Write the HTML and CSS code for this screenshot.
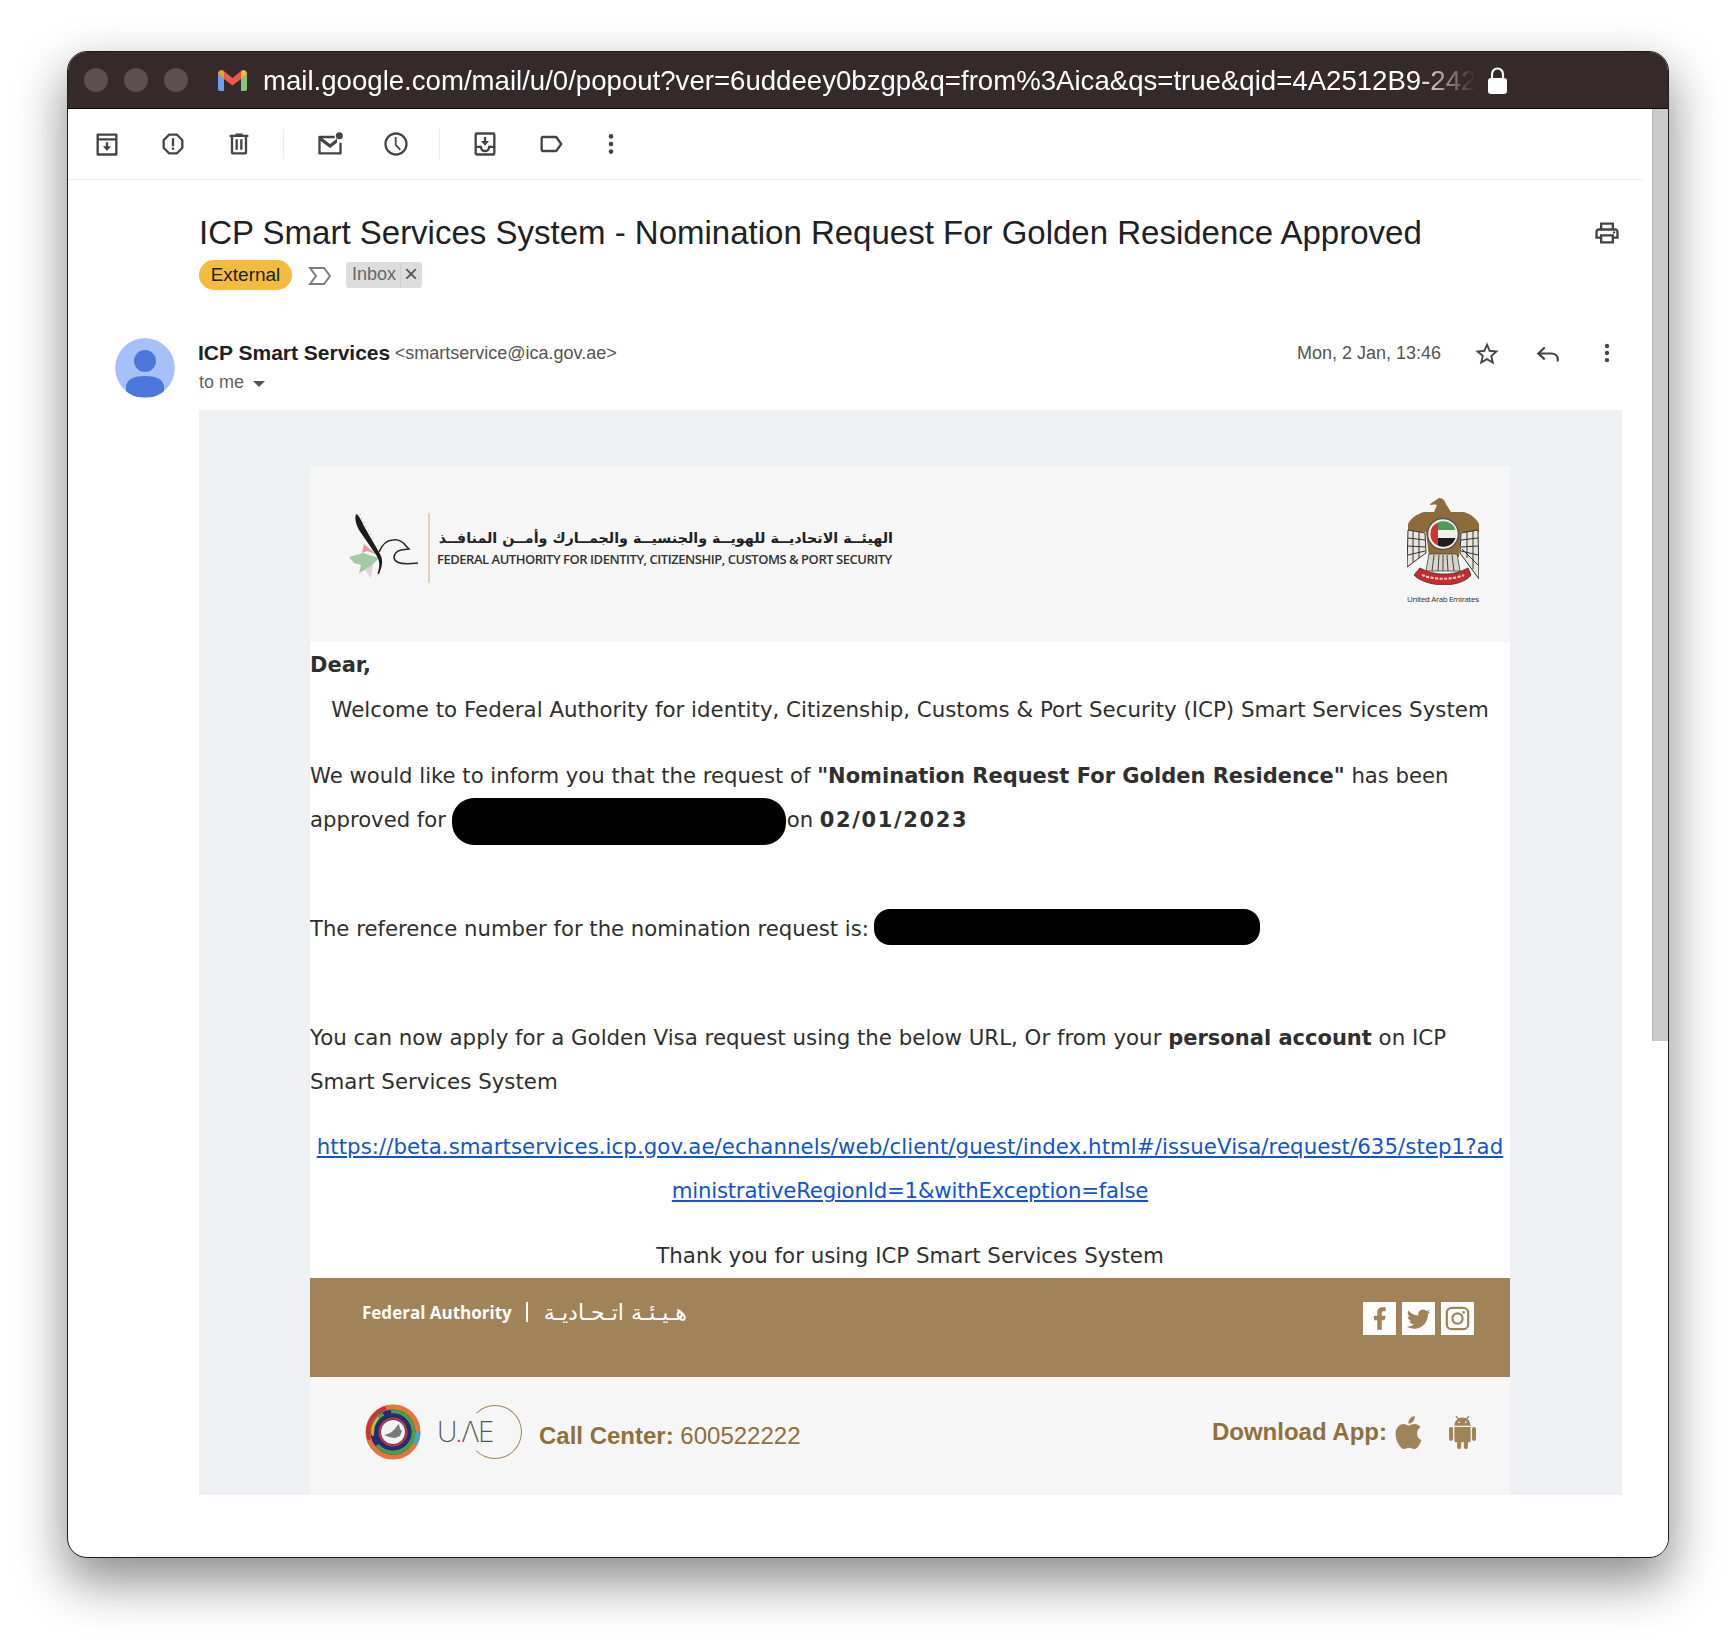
FILE: index.html
```html
<!DOCTYPE html>
<html>
    <head>
        <meta charset="UTF-8">
        <meta name="viewport" content="width=device-width, initial-scale=1.0">
        <title>ICP Smart Services System</title>
        <link rel="stylesheet" href="styles.css">
    </head>

    <body>
        <div class="window">
            <div class="titlebar">
                <span class="dot"></span>
                <span class="dot"></span>
                <span class="dot"></span>
                <svg class="gmail" viewBox="0 0 29 21">
                    <path d="M0 4v15a2 2 0 0 0 2 2h4V9z" fill="#6f9bf0"/>
                    <path d="M29 4v15a2 2 0 0 1-2 2h-4V9z" fill="#86c77f"/>
                    <path d="M0 4C0 1 3-.8 5.500.8L14.500 8 23.500.8C26-.8 29 1 29 4l-6 5-8.500 6.500L6 9z" fill="#ea5b4c"/>
                    <path d="M0 4l6 5V2L5.500.8C3-.8 0 1 0 4z" fill="#d9a93c"/>
                    <path d="M29 4l-6 5V2l.5-1.200C26-.8 29 1 29 4z" fill="#f1bf42"/>
                </svg>
                <span class="url">mail.google.com/mail/u/0/popout?ver=6uddeey0bzgp&amp;q=from%3Aica&amp;qs=true&amp;qid=4A2512B9-242</span>
                <svg class="lock" viewBox="0 0 19 27">
                    <path d="M4 12V7a5.500 5.500 0 0 1 11 0v5" fill="none" stroke="#fff" stroke-width="2.200"/>
                    <rect x="0" y="11" width="19" height="16" rx="3" fill="#fff"/>
                </svg>
            </div>

            <div class="frame">
                <div class="main">
                    <div class="toolbar">
                        <span class="tool"><svg class="icon" viewBox="0 0 24 24"><path d="M4 3h16a1 1 0 0 1 1 1v17a1 1 0 0 1-1 1H4a1 1 0 0 1-1-1V4a1 1 0 0 1 1-1zm1 2v2h14V5zm0 4v11h14V9zm6 1.500h2V14h2.500L12 18l-3.500-4H11z"/></svg></span>
                        <span class="tool"><svg class="icon" viewBox="0 0 24 24"><path d="M15.730 3H8.270L3 8.270v7.460L8.270 21h7.460L21 15.730V8.270zM19 14.900L14.900 19H9.100L5 14.900V9.100L9.100 5h5.800L19 9.100z"/><path d="M11 7h2v7h-2zm0 8h2v2h-2z"/></svg></span>
                        <span class="tool"><svg class="icon" viewBox="0 0 24 24"><path d="M15 4V3H9v1H4v2h1v13c0 1.100.9 2 2 2h10c1.100 0 2-.9 2-2V6h1V4h-5zm2 15H7V6h10v13zM9 8h2v9H9zm4 0h2v9h-2z"/></svg></span>
                        <span class="sep sep-a"></span>
                        <span class="tool"><svg class="icon" viewBox="0 0 24 24"><path d="M2 5h14v2H5.500l6.500 5 6-4.600V11l-6 4.500L4 9.500V19h16v-8h2v9a1 1 0 0 1-1 1H3a1 1 0 0 1-1-1V6a1 1 0 0 1 1-1z"/><circle cx="20" cy="5" r="3"/></svg></span>
                        <span class="tool"><svg class="icon" viewBox="0 0 24 24"><path d="M11.990 2C6.470 2 2 6.480 2 12s4.470 10 9.990 10C17.520 22 22 17.520 22 12S17.520 2 11.990 2zM12 20c-4.420 0-8-3.580-8-8s3.580-8 8-8 8 3.580 8 8-3.580 8-8 8zm.5-14H11v7l4.200 4.500 1.100-1-3.800-4.100z"/></svg></span>
                        <span class="sep sep-b"></span>
                        <span class="tool"><svg class="icon" viewBox="0 0 24 24"><rect x="4" y="3" width="16" height="18" rx="1" fill="none" stroke="#444" stroke-width="2"/><path d="M4 14.500h4.500c0 2 1.500 3.500 3.500 3.500s3.500-1.500 3.500-3.500H20" fill="none" stroke="#444" stroke-width="2"/><path d="M11 6h2v3.500h2.500L12 13.500l-3.500-4H11z"/></svg></span>
                        <span class="tool"><svg class="icon" viewBox="0 0 24 24"><path d="M17.630 5.840C17.270 5.330 16.670 5 16 5L5 5.010C3.900 5.010 3 5.900 3 7v10c0 1.100.9 1.990 2 1.990L16 19c.67 0 1.270-.33 1.630-.84L22 12l-4.370-6.160zM16 17H5V7h11l3.550 5L16 17z"/></svg></span>
                        <span class="tool tool-more"><svg class="icon" viewBox="0 0 24 24"><circle cx="12" cy="5.500" r="2"/><circle cx="12" cy="12" r="2"/><circle cx="12" cy="18.500" r="2"/></svg></span>
                    </div>

                    <div class="subject-row">
                        <div class="subject-text">
                            <h1 class="subject">ICP Smart Services System - Nomination Request For Golden Residence Approved</h1>
                            <div class="chips">
                                <span class="chip-external">External</span>
                                <svg class="marker" viewBox="0 0 24 20"><path d="M2 2h14l6 8-6 8H2l6-8z" fill="none" stroke="#7d7d7d" stroke-width="2"/></svg>
                                <span class="chip-inbox"><span class="chip-name">Inbox</span><span class="chip-x">×</span></span>
                            </div>
                        </div>
                        <svg class="icon print" viewBox="0 0 24 24"><path d="M19 8h-1V3H6v5H5c-1.660 0-3 1.340-3 3v6h4v4h12v-4h4v-6c0-1.660-1.340-3-3-3zM8 5h8v3H8V5zm8 12v2H8v-4h8v2zm2-2v-2H6v2H4v-4c0-.55.45-1 1-1h14c.55 0 1 .45 1 1v4h-2z"/><circle cx="18" cy="11.500" r="1"/></svg>
                    </div>

                    <div class="sender-row">
                        <svg class="avatar" viewBox="0 0 60 60">
                            <circle cx="30" cy="30" r="30" fill="#a6c1fa"/>
                            <circle cx="30" cy="23" r="11" fill="#4e77dc"/>
                            <path d="M11 57V49c0-8 9-11 19-11s19 3 19 11v8c-5 3-33 3-38 0z" fill="#4e77dc"/>
                        </svg>
                        <div class="sender-info">
                            <div class="sender-line"><b class="sender-name">ICP Smart Services</b> <span class="sender-mail">&lt;smartservice@ica.gov.ae&gt;</span></div>
                            <div class="to-me">to me <span class="caret"></span></div>
                        </div>
                        <span class="date">Mon, 2 Jan, 13:46</span>
                        <svg class="icon star" viewBox="0 0 24 24"><path d="M22 9.240l-7.190-.62L12 2 9.190 8.630 2 9.240l5.460 4.730L5.820 21 12 17.270 18.180 21l-1.630-7.030L22 9.240zM12 15.400l-3.760 2.270 1-4.280-3.320-2.880 4.380-.38L12 6.100l1.710 4.040 4.380.38-3.320 2.880 1 4.280L12 15.400z"/></svg>
                        <svg class="icon reply" viewBox="0 0 24 24"><path d="M9 6l-6 5.500L9 17M3 11.500h12c3.500 0 6 2.200 6 5.500v2" fill="none" stroke="#444" stroke-width="2"/></svg>
                        <svg class="icon more" viewBox="0 0 24 24"><circle cx="12" cy="5.500" r="2"/><circle cx="12" cy="12" r="2"/><circle cx="12" cy="18.500" r="2"/></svg>
                    </div>

                    <div class="mail-panel">
                        <div class="mail">
                            <div class="mail-head">
                                <div class="brand">
                                    <svg class="falcon" viewBox="0 0 70 66">
                                        <path d="M15 31l12 10-9-3-5 2z" fill="#e79a9a"/>
                                        <path d="M0 44l14-4 16 5-10 10-10 5 2-8-7-2z" fill="#a3caa3"/>
                                        <path d="M16 56l8-4-2 13-4-5z" fill="#d8d8d8"/>
                                        <path d="M7 1c3 1 5 6 9 14l15 26c3 5 3 11-1 20l-1.500-.5c3-8 2-13-1-18L10 17C7 11 5.500 6 7 1z" fill="#1c1c1c"/>
                                        <path d="M30 39c3-7 8-12 14-12 6-1 10 2 13 6l3 3-8 1c-4 1-7 4-7 8 1 5 9 7 24 5" fill="none" stroke="#2a2a2a" stroke-width="1.600"/>
                                        <path d="M11 1l4 9 5 9 6 9" fill="none" stroke="#d8b784" stroke-width="1.500" stroke-dasharray="1 3.500"/>
                                    </svg>
                                    <span class="brand-rule"></span>
                                    <div class="brand-text">
                                        <div class="brand-ar" dir="rtl">الهيئــة الاتحاديــة للهويــة والجنسيــة والجمــارك وأمــن المنافــذ</div>
                                        <div class="brand-en">FEDERAL AUTHORITY FOR IDENTITY, CITIZENSHIP, CUSTOMS &amp; PORT SECURITY</div>
                                    </div>
                                </div>
                                <div class="emblem">
                                    <svg class="eagle" viewBox="0 0 72 88">
                                        <path d="M23 7l9-6c4 0 6 3 7 6l5 8 13 0c7 2 13 7 15 12v8H54l-2 25H22l-3-25H1v-8c3-6 9-10 16-12l10 0 3-7c-3-1-5 0-7 0z" fill="#8d6c3b"/>
                                        <path d="M1 33l17 3 1 20L0 70zM71 33L54 36l-1 20 19 26z" fill="#e9e6e0" stroke="#333" stroke-width="1"/>
                                        <path d="M1 41l17 2M1 49l17 1M1 58l17-4M71 41l-17 2M71 49l-17 1M71 58l-17-4M71 68L55 52M6 34v31M12 35v26M66 34v38M60 35v26" stroke="#333" stroke-width="1" fill="none"/>
                                        <path d="M22 57h28l3 17H19z" fill="#d8d4cc" stroke="#444" stroke-width=".8"/>
                                        <path d="M27 58l-2 16M32 58l-1 16M36 58v16M40 58l1 16M45 58l2 16" stroke="#444" stroke-width="1"/>
                                        <circle cx="36" cy="37" r="15.500" fill="#f1efe9" stroke="#555" stroke-width="1.500"/>
                                        <path d="M31 25.500A12.500 12.500 0 0 1 48.500 33H31z" fill="#4d9a5c"/>
                                        <path d="M31 41h17.500A12.500 12.500 0 0 1 31 48.500z" fill="#1d1d1d"/>
                                        <path d="M31 25.500v23a12.500 12.500 0 0 1 0-23z" fill="#c8382e"/>
                                        <path d="M7 78l6-7c8 4 15 6 24 6s16-2 24-6l3 7c-4 6-16 10-27 10S12 84 7 78z" fill="#c32d30" stroke="#333" stroke-width=".8"/>
                                        <path d="M15 78c12 5 30 5 42 0" fill="none" stroke="#f4d8d8" stroke-width="2" stroke-dasharray="3 1.500"/>
                                    </svg>
                                    <div class="emblem-name">United Arab Emirates</div>
                                </div>
                            </div>

                            <div class="mail-body">
                                <p class="line"><b>Dear,</b></p>
                                <p class="line center wide">Welcome to Federal Authority for identity, Citizenship, Customs &amp; Port Security (ICP) Smart Services System</p>
                                <p class="para">We would like to inform you that the request of <b>"Nomination Request For Golden Residence"</b> has been approved for <span class="pill pill-name"></span>on <b class="date-value">02/01/2023</b></p>
                                <p class="para gap">The reference number for the nomination request is: <span class="pill pill-ref"></span></p>
                                <p class="para gap wide">You can now apply for a Golden Visa request using the below URL, Or from your <b>personal account</b> on ICP Smart Services System</p>
                                <p class="para center link-line"><a href="#"><span class="link-head">https://beta.smartservices.icp.gov.ae/echannels/web/client/guest/index.html#/issueVisa/request/635/step1?ad</span><br><span class="link-tail">ministrativeRegionId=1&amp;withException=false</span></a></p>
                                <p class="para center thanks wide">Thank you for using ICP Smart Services System</p>
                            </div>

                            <div class="band">
                                <div class="band-name">
                                    <span class="band-en">Federal Authority</span>
                                    <span class="band-rule"></span>
                                    <span class="band-ar" dir="rtl">هـيـئـة اتـحـاديـة</span>
                                </div>
                                <div class="social">
                                    <span class="social-box"><svg viewBox="0 0 24 24"><path d="M14 13.500h2.500l1-4H14v-2c0-1.030 0-2 2-2h1.500V2.140c-.326-.043-1.557-.14-2.857-.14C11.928 2 10 3.657 10 6.700v2.800H7v4h3V22h4v-8.500z"/></svg></span>
                                    <span class="social-box"><svg viewBox="0 0 24 24"><path d="M22.460 6c-.77.35-1.600.58-2.460.69.88-.53 1.560-1.370 1.880-2.380-.83.5-1.750.85-2.720 1.050C18.370 4.500 17.260 4 16 4c-2.350 0-4.270 1.920-4.270 4.290 0 .34.04.67.11.98C8.280 9.090 5.110 7.380 3 4.790c-.37.63-.58 1.370-.58 2.150 0 1.490.75 2.810 1.910 3.560-.71 0-1.370-.2-1.950-.5v.03c0 2.080 1.480 3.820 3.440 4.210a4.220 4.220 0 0 1-1.930.07 4.280 4.280 0 0 0 4 2.980 8.521 8.521 0 0 1-5.330 1.840c-.34 0-.68-.02-1.020-.06C3.440 20.290 5.700 21 8.120 21 16 21 20.330 14.460 20.330 8.790c0-.19 0-.37-.01-.56.84-.6 1.560-1.360 2.140-2.230z"/></svg></span>
                                    <span class="social-box"><svg viewBox="0 0 24 24"><rect x="2.500" y="2.500" width="19" height="19" rx="4.500" fill="none" stroke="#a08359" stroke-width="2"/><circle cx="12" cy="12" r="4.500" fill="none" stroke="#a08359" stroke-width="2"/><circle cx="17.500" cy="6.500" r="1.200"/></svg></span>
                                </div>
                            </div>

                            <div class="contact">
                                <div class="contact-left">
                                    <svg class="ring" viewBox="0 0 56 56">
                                        <circle cx="28" cy="28" r="27" fill="#1f2f73"/>
                                        <circle cx="28" cy="28" r="25" fill="none" stroke="#e8743b" stroke-width="5"/>
                                        <circle cx="28" cy="28" r="25" fill="none" stroke="#3fa7d6" stroke-width="5" stroke-dasharray="42 200" stroke-dashoffset="30"/>
                                        <circle cx="28" cy="28" r="25" fill="none" stroke="#c9353a" stroke-width="4" stroke-dasharray="40 200" stroke-dashoffset="-70"/>
                                        <circle cx="28" cy="28" r="20.500" fill="none" stroke="#4b9f4a" stroke-width="4" stroke-dasharray="50 12 24 8"/>
                                        <circle cx="28" cy="28" r="20.500" fill="none" stroke="#f0b13c" stroke-width="2" stroke-dasharray="20 70" stroke-dashoffset="-60"/>
                                        <circle cx="28" cy="28" r="16.500" fill="none" stroke="#1f2f73" stroke-width="4"/>
                                        <circle cx="28" cy="28" r="13.500" fill="none" stroke="#c9353a" stroke-width="2"/>
                                        <circle cx="28" cy="28" r="12" fill="#f2f2f2"/>
                                        <path d="M19 31c5-1 9-3 13-9l2-2 1 5 2 2-2 5-5 2-6-1z" fill="#77797c"/>
                                    </svg>
                                    <span class="uae"><span class="uae-word">U<i class="uae-dot">.</i>ΛE</span><span class="uae-circle"></span></span>
                                    <span class="call"><b>Call Center:</b> 600522222</span>
                                </div>
                                <div class="download">
                                    <b class="download-label">Download App:</b>
                                    <svg class="store apple" viewBox="3.500 2 17 20" preserveAspectRatio="none"><path d="M18.710 19.500C17.880 20.740 17 21.950 15.660 21.970C14.320 22 13.890 21.180 12.370 21.180C10.840 21.180 10.370 21.950 9.100 22C7.790 22.050 6.800 20.680 5.960 19.470C4.250 17 2.940 12.450 4.700 9.390C5.570 7.870 7.130 6.910 8.820 6.880C10.100 6.860 11.320 7.750 12.110 7.750C12.890 7.750 14.370 6.680 15.920 6.840C16.570 6.870 18.390 7.100 19.560 8.820C19.470 8.880 17.390 10.100 17.410 12.630C17.440 15.650 20.060 16.660 20.090 16.670C20.060 16.740 19.670 18.110 18.710 19.500M13 3.500C13.730 2.670 14.940 2.040 15.940 2C16.070 3.170 15.600 4.350 14.900 5.190C14.210 6.040 13.050 6.700 11.910 6.610C11.760 5.460 12.330 4.260 13 3.500Z"/></svg>
                                    <svg class="store android" viewBox="2 0 20 24" preserveAspectRatio="none"><path d="M6 18c0 .55.45 1 1 1h1v3.500c0 .83.67 1.500 1.500 1.500s1.500-.67 1.500-1.500V19h2v3.500c0 .83.67 1.500 1.500 1.500s1.500-.67 1.500-1.500V19h1c.55 0 1-.45 1-1V8H6v10zM3.500 8C2.670 8 2 8.670 2 9.500v7c0 .83.67 1.500 1.500 1.500S5 17.330 5 16.500v-7C5 8.670 4.330 8 3.500 8zm17 0c-.83 0-1.500.67-1.500 1.500v7c0 .83.67 1.500 1.500 1.500s1.500-.67 1.500-1.500v-7c0-.83-.67-1.500-1.500-1.500zm-4.970-5.840l1.300-1.300c.2-.2.2-.51 0-.71-.2-.2-.51-.2-.71 0l-1.480 1.480C13.850 1.230 12.950 1 12 1c-.96 0-1.860.23-2.660.63L7.850.15c-.2-.2-.51-.2-.71 0-.2.2-.2.51 0 .71l1.310 1.310C6.970 3.260 6 5.010 6 7h12c0-1.990-.97-3.750-2.470-4.840zM10 5H9V4h1v1zm5 0h-1V4h1v1z"/></svg>
                                </div>
                            </div>
                        </div>
                    </div>
                </div>

                <div class="scrollbar"><div class="scroll-thumb"></div></div>
            </div>
        </div>
    </body>
</html>
```

FILE: styles.css
```css
html {
    height: 100%;
}
body {
    font-family: 'Liberation Sans', Arial, sans-serif;
    background: #fff;
    margin: 0;
    padding: 51px 0 0 67px;
    min-height: 1642px;
    box-sizing: border-box;
    overflow: hidden;
}
.window {
    width: 1600px;
    height: 1505px;
    border: 1px solid #1c1c1c;
    border-radius: 20px;
    overflow: hidden;
    background: #fff;
    box-shadow: 0 22px 50px 2px rgba(0, 0, 0, 0.45);
    display: flex;
    flex-direction: column;
}
.titlebar {
    flex: none;
    height: 56px;
    background: #352a29;
    border-bottom: 1px solid #0c0808;
    display: flex;
    align-items: center;
    padding-left: 16px;
}
.dot {
    width: 24px;
    height: 24px;
    border-radius: 50%;
    background: #5b4f4d;
    margin-right: 16px;
}
.gmail {
    width: 29px;
    height: 21px;
    margin: 0 16px 0 14px;
}
.url {
    width: 1212px;
    padding-top: 1px;
    font-size: 27.600px;
    color: #fff;
    white-space: nowrap;
    overflow: hidden;
    -webkit-mask-image: linear-gradient(90deg, #000 95%, transparent 100%);
    mask-image: linear-gradient(90deg, #000 95%, transparent 100%);
}
.lock {
    width: 19px;
    height: 27px;
    margin-left: 13px;
}
.frame {
    flex: 1;
    display: flex;
    min-height: 0;
}
.main {
    flex: 1;
    min-width: 0;
}
.scrollbar {
    flex: none;
    width: 16px;
    background: #fff;
}
.scroll-thumb {
    height: 932px;
    background: #cbcbcb;
    border-left: 1px solid #b5b5b5;
}

.toolbar {
    height: 70px;
    margin-right: 9px;
    padding-left: 6px;
    border-bottom: 1px solid #ebebeb;
    display: flex;
    align-items: center;
}
.tool {
    width: 66px;
    display: flex;
    justify-content: center;
}
.tool-more {
    width: 54px;
}
.icon {
    width: 26px;
    height: 26px;
    fill: #444;
}
.tool .icon {
    width: 28px;
    height: 28px;
}
.sep {
    width: 1px;
    height: 30px;
    background: #ececec;
}
.sep-a {
    margin: 0 13px 0 11px;
}
.sep-b {
    margin: 0 12px 0 10px;
}

.subject-row {
    display: flex;
    justify-content: space-between;
    padding: 31px 31px 0 131px;
    height: 158px;
    box-sizing: border-box;
}
.subject {
    margin: 0;
    font-size: 33px;
    line-height: 44px;
    font-weight: normal;
    color: #202124;
}
.print {
    width: 28px;
    height: 28px;
    margin-top: 8px;
}
.chips {
    display: flex;
    align-items: center;
    height: 30px;
    margin-top: 5px;
}
.chip-external {
    width: 93px;
    height: 30px;
    line-height: 30px;
    border-radius: 15px;
    background: #f2bd3e;
    color: #202124;
    font-size: 19px;
    text-align: center;
}
.marker {
    width: 24px;
    height: 20px;
    margin: 2px 14px 0 16px;
}
.chip-inbox {
    display: flex;
    height: 26px;
    line-height: 24px;
    background: #dddddd;
    border-radius: 3px;
    color: #666;
    font-size: 18px;
}
.chip-name {
    padding: 0 4px 0 6px;
    border-right: 1px solid #d0d0d0;
}
.chip-x {
    padding: 0 4px 0 3px;
    font-size: 24px;
    color: #555;
}

.sender-row {
    display: flex;
    align-items: flex-start;
    height: 72px;
    padding: 0 32px 0 47px;
}
.avatar {
    width: 60px;
    height: 60px;
    margin: 0 23px 0 0;
    border-radius: 50%;
}
.sender-info {
    flex: 1;
    padding-top: 2px;
}
.sender-line {
    height: 26px;
    line-height: 26px;
}
.sender-name {
    font-size: 21px;
    color: #202124;
}
.sender-mail {
    font-size: 18px;
    vertical-align: 1px;
    color: #555;
}
.to-me {
    margin: 5px 0 0 1px;
    font-size: 18px;
    line-height: 22px;
    color: #5f6368;
}
.caret {
    display: inline-block;
    width: 0;
    height: 0;
    margin: 0 0 1px 4px;
    border-left: 6px solid transparent;
    border-right: 6px solid transparent;
    border-top: 6px solid #555;
}
.date {
    font-size: 18px;
    line-height: 26px;
    margin-top: 2px;
    color: #555;
}
.star {
    width: 28px;
    height: 28px;
    margin: 2px 0 0 32px;
}
.reply {
    margin: 3px 0 0 34px;
}
.more {
    margin: 2px 0 0 33px;
}

.mail-panel {
    margin: 0 30px 0 131px;
    height: 1085px;
    padding: 56px 0 0 111px;
    box-sizing: border-box;
    background: #eef0f4;
}
.mail {
    width: 1200px;
    background: #fff;
}
.mail-head {
    height: 176px;
    padding: 31px 31px 0 39px;
    box-sizing: border-box;
    background: #f6f6f6;
    display: flex;
    justify-content: space-between;
}
.brand {
    display: flex;
    align-items: flex-start;
    padding-top: 16px;
}
.falcon {
    width: 70px;
    height: 66px;
    filter: blur(.4px);
}
.brand-rule {
    width: 2px;
    height: 70px;
    margin: 0 7px 0 9px;
    background: #e2d3b8;
}
.brand-text {
    width: 456px;
    padding-top: 14px;
}
.brand-ar {
    font-family: 'DejaVu Sans', sans-serif;
    font-size: 14.300px;
    font-weight: bold;
    line-height: 22px;
    color: #222;
    white-space: nowrap;
}
.brand-en {
    margin-top: 2px;
    font-family: 'Open Sans', sans-serif;
    font-size: 13px;
    font-weight: 600;
    letter-spacing: -.47px;
    line-height: 16px;
    color: #333;
    white-space: nowrap;
}
.emblem {
    width: 72px;
}
.eagle {
    display: block;
    width: 72px;
    height: 88px;
    filter: blur(.3px);
}
.emblem-name {
    margin-top: 8px;
    font-family: 'Open Sans', sans-serif;
    font-size: 8px;
    letter-spacing: -.4px;
    line-height: 12px;
    color: #333;
    white-space: nowrap;
}

.mail-body {
    font-family: 'DejaVu Sans', Verdana, sans-serif;
    font-size: 21.200px;
    line-height: 44px;
    color: #2f2f2f;
    height: 636px;
    padding-top: 1px;
    box-sizing: border-box;
    overflow: hidden;
}
.mail-body b {
    font-size: 21px;
}
.mail-body b.date-value {
    letter-spacing: 1.600px;
}
.mail-body p {
    margin: 0;
}
.mail-body p.wide {
    font-size: 21.350px;
}
.mail-body p.line {
    margin-bottom: 1px;
}
.mail-body p.para {
    margin-top: 22px;
}
.mail-body p.gap {
    margin-top: 65px;
}
.mail-body p.link-line,
.mail-body p.thanks {
    margin-top: 21px;
}
.center {
    text-align: center;
}
.link-line a {
    color: #1155cc;
}
.link-head {
    font-size: 21.300px;
    letter-spacing: .06px;
    white-space: nowrap;
}
.link-tail {
    font-size: 21.300px;
    letter-spacing: -.24px;
}
.pill {
    display: inline-block;
    background: #000;
    vertical-align: middle;
}
.pill-name {
    width: 334px;
    height: 47px;
    margin: -3px 1px -3px -1px;
    border-radius: 22px;
}
.pill-ref {
    width: 386px;
    height: 36px;
    margin: -6px 0 0 -2px;
    border-radius: 16px;
}

.band {
    height: 99px;
    padding: 23px 36px 0 52px;
    box-sizing: border-box;
    background: #a08359;
    display: flex;
    justify-content: space-between;
    align-items: flex-start;
}
.band-name {
    display: flex;
    align-items: center;
    height: 22px;
    color: #fff;
}
.band-en {
    font-family: 'Open Sans', sans-serif;
    font-size: 17px;
    font-weight: 700;
}
.band-rule {
    width: 2px;
    height: 20px;
    margin: 0 16px 0 14px;
    background: #fff;
}
.band-ar {
    font-family: 'DejaVu Sans', sans-serif;
    font-size: 22px;
}
.social {
    display: flex;
    gap: 6px;
    margin-top: 1px;
}
.social-box {
    width: 33px;
    height: 33px;
    background: #fff;
    display: flex;
    align-items: center;
    justify-content: center;
}
.social-box svg {
    width: 27px;
    height: 27px;
    fill: #a08359;
}

.contact {
    height: 118px;
    padding: 0 34px 0 55px;
    box-sizing: border-box;
    background: #f6f6f6;
    display: flex;
    justify-content: space-between;
    align-items: center;
}
.contact-left {
    display: flex;
    align-items: center;
}
.ring {
    width: 56px;
    height: 56px;
    margin-bottom: 8px;
    filter: blur(.3px);
}
.uae {
    display: flex;
    align-items: center;
    width: 85px;
    height: 54px;
    margin: 0 0 8px 16px;
    position: relative;
}
.uae-word {
    font-family: 'Inter', sans-serif;
    font-size: 28px;
    font-weight: 200;
    letter-spacing: -1.500px;
    color: #555;
}
.uae-dot {
    color: #d23a48;
    font-style: normal;
}
.uae-circle {
    position: absolute;
    left: 31px;
    top: 0;
    width: 52px;
    height: 52px;
    border: 1px solid #a08359;
    border-left-color: transparent;
    border-radius: 50%;
}
.call {
    margin-left: 17px;
    font-size: 24px;
    color: #8f6f3c;
}
.download {
    display: flex;
    align-items: center;
    margin-bottom: 8px;
}
.download-label {
    font-size: 24px;
    color: #8f6f3c;
}
.store {
    display: block;
    fill: #a08359;
}
.apple {
    width: 27px;
    height: 33px;
    margin-left: 8px;
}
.android {
    width: 27px;
    height: 33px;
    margin-left: 27px;
}
```
